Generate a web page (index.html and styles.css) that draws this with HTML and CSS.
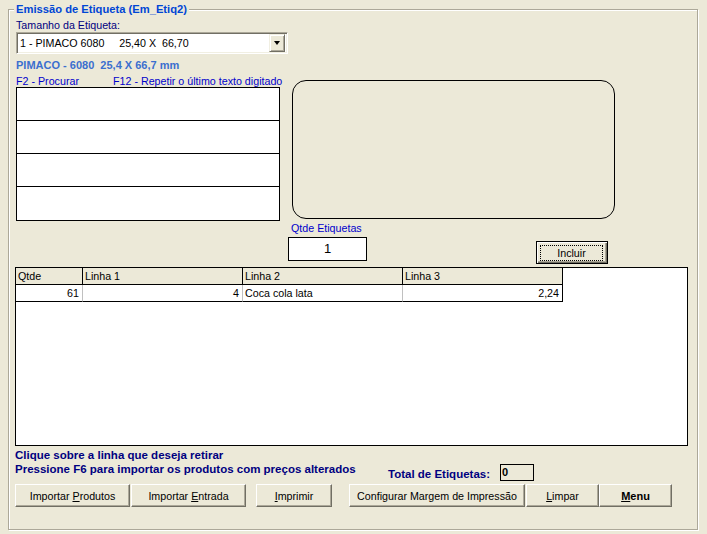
FILE: index.html
```html
<!DOCTYPE html>
<html lang="pt-BR">
<head>
<meta charset="utf-8">
<title>Emissão de Etiqueta</title>
<link rel="stylesheet" href="styles.css">
</head>
<body>
<div class="frame">
  <div class="frame-title">Emissão de Etiqueta (Em_Etiq2)</div>
  <div class="label-navy">Tamanho da Etiqueta:</div>
  <div class="combo">
    <span class="combo-text">1 - PIMACO 6080     25,40 X  66,70</span>
    <span class="combo-btn"><span class="tri"></span></span>
  </div>
  <div class="pimaco">PIMACO - 6080&nbsp; 25,4 X 66,7 mm</div>
  <div class="editor">
    <div class="left-col">
      <div class="hints"><span class="hint-f2">F2 - Procurar</span><span>F12 - Repetir o último texto digitado</span></div>
      <div class="lines">
        <div class="line"></div>
        <div class="line"></div>
        <div class="line"></div>
        <div class="line"></div>
      </div>
    </div>
    <div class="right-col">
      <div class="preview"></div>
      <div class="qty-row">
        <div class="qty">
          <div class="qty-label">Qtde Etiquetas</div>
          <div class="qty-box">1</div>
        </div>
        <button class="btn btn-default"><span class="focus">Incluir</span></button>
      </div>
    </div>
  </div>
  <div class="list">
    <div class="list-grid">
      <div class="th">Qtde</div>
      <div class="th">Linha 1</div>
      <div class="th">Linha 2</div>
      <div class="th">Linha 3</div>
      <div class="td num">61</div>
      <div class="td num">4</div>
      <div class="td">Coca cola lata</div>
      <div class="td num last">2,24</div>
    </div>
  </div>
  <div class="status">
    <div class="msgs">
      <div>Clique sobre a linha que deseja retirar</div>
      <div>Pressione F6 para importar os produtos com preços alterados</div>
    </div>
    <div class="total">
      <span class="total-label">Total de Etiquetas:</span>
      <span class="total-box">0</span>
    </div>
  </div>
  <div class="actions">
    <button class="btn b-prod">Importar <u>P</u>rodutos</button>
    <button class="btn b-entr">Importar <u>E</u>ntrada</button>
    <button class="btn b-impr"><u>I</u>mprimir</button>
    <button class="btn b-conf">Configurar Margem de Impressão</button>
    <button class="btn b-limp"><u>L</u>impar</button>
    <button class="btn b-menu"><u>M</u>enu</button>
  </div>
</div>
</body>
</html>
```

FILE: styles.css
```css
html, body {
  margin: 0;
  padding: 0;
}
body {
  width: 707px;
  height: 534px;
  overflow: hidden;
  background: #ece9d8;
  font-family: "Liberation Sans", Arial, sans-serif;
  font-size: 10.7px;
  color: #000;
}
.frame {
  position: relative;
  box-sizing: border-box;
  width: 690px;
  height: 521px;
  margin: 9px 0 0 8px;
  border: 1px solid #aca899;
  box-shadow: inset 1px 1px 0 #fff, 1px 1px 0 #fff;
  padding: 9px 9px 0 6px;
}
.frame-title {
  position: absolute;
  top: -8px;
  left: 5px;
  padding: 0 2px;
  background: #ece9d8;
  color: #0046d5;
  font-weight: bold;
  font-size: 11.2px;
  line-height: 14px;
  white-space: nowrap;
}
.label-navy {
  padding-left: 1px;
  line-height: 13px;
  color: #000080;
}
.combo {
  box-sizing: border-box;
  display: flex;
  align-items: center;
  justify-content: space-between;
  width: 272px;
  height: 22px;
  margin-left: 1px;
  background: #fff;
  border: 1px solid;
  border-color: #aca899 #fff #fff #aca899;
  box-shadow: inset 1px 1px 0 #716f64, inset -1px -1px 0 #f1efe2;
  padding: 0 2px 0 2px;
}
.combo-text {
  white-space: pre;
  padding-left: 1px;
  line-height: 14px;
}
.combo-btn {
  box-sizing: border-box;
  display: flex;
  align-items: center;
  justify-content: center;
  width: 16px;
  height: 18px;
  background: #ece9d8;
  border: 1px solid;
  border-color: #f1efe2 #716f64 #716f64 #f1efe2;
  box-shadow: inset 1px 1px 0 #fff, inset -1px -1px 0 #aca899;
}
.tri {
  width: 0;
  height: 0;
  border-left: 3.5px solid transparent;
  border-right: 3.5px solid transparent;
  border-top: 4px solid #000;
}
.pimaco {
  margin-top: 5px;
  padding-left: 1px;
  font-size: 11px;
  font-weight: bold;
  line-height: 13px;
  color: #3b6fcf;
  white-space: nowrap;
}
.editor {
  display: flex;
  margin-top: 3px;
}
.left-col {
  width: 264px;
  margin-left: 1px;
}
.hints {
  display: flex;
  height: 12px;
  line-height: 12px;
  color: #0000cc;
  white-space: nowrap;
}
.hint-f2 {
  width: 97px;
  flex: none;
}
.lines {
  box-sizing: border-box;
  width: 264px;
  height: 134px;
  border: 1px solid #000;
  background: #fff;
}
.line {
  height: 32px;
  border-bottom: 1px solid #000;
}
.line:last-child {
  height: 33px;
  border-bottom: 0;
}
.right-col {
  margin-left: 8px;
}
.preview {
  box-sizing: border-box;
  width: 323px;
  height: 139px;
  margin: 5px 0 0 4px;
  border: 1px solid #000;
  border-radius: 14px;
}
.qty-row {
  display: flex;
  align-items: flex-start;
  margin-top: 3px;
}
.qty {
  width: 79px;
}
.qty-label {
  padding-left: 3px;
  line-height: 13px;
  color: #0000cc;
  white-space: nowrap;
}
.qty-box {
  box-sizing: border-box;
  width: 79px;
  height: 24px;
  margin-top: 2px;
  border: 1px solid #000;
  background: #fff;
  text-align: center;
  font-size: 13px;
  line-height: 21px;
}
.btn {
  box-sizing: border-box;
  height: 23px;
  padding: 0;
  margin: 0;
  font-family: "Liberation Sans", Arial, sans-serif;
  font-size: 10.7px;
  color: #000;
  background: #ece9d8;
  border: 1px solid;
  border-color: #fff #716f64 #716f64 #fff;
  box-shadow: inset -1px -1px 0 #aca899;
  white-space: nowrap;
  cursor: default;
}
.btn-default {
  width: 72px;
  margin: 19px 0 0 169px;
  padding: 3px 4px 2px 3px;
  border: 1px solid #000;
  box-shadow: inset 1px 1px 0 #fff, inset -1px -1px 0 #716f64, inset -2px -2px 0 #aca899;
}
.focus {
  box-sizing: border-box;
  display: flex;
  align-items: center;
  justify-content: center;
  width: 100%;
  height: 100%;
  border: 1px dotted #000;
}
.list {
  box-sizing: border-box;
  width: 673px;
  height: 179px;
  margin-top: 3px;
  border: 1px solid #000;
  background: #fff;
}
.list-grid {
  display: grid;
  grid-template-columns: 67px 160px 160px 160px;
  width: 547px;
}
.th, .td {
  box-sizing: border-box;
  height: 17px;
  line-height: 16px;
  border-bottom: 1px solid #000;
  white-space: nowrap;
  overflow: hidden;
}
.th {
  background: #ece9d8;
  border-right: 1px solid #000;
  padding-left: 2px;
}
.td {
  border-right: 1px solid #c0c0c0;
  padding: 0 3px 0 2px;
}
.td.last {
  border-right-color: #000;
}
.num {
  text-align: right;
}
.status {
  display: flex;
  margin-top: 2px;
}
.msgs {
  width: 373px;
  font-size: 11.5px;
  font-weight: bold;
  line-height: 14px;
  color: #000080;
  white-space: nowrap;
}
.total {
  display: flex;
  align-items: center;
  margin-top: 16px;
  color: #000080;
  font-size: 11.5px;
  font-weight: bold;
}
.total-label {
  width: 112px;
  white-space: nowrap;
  padding-top: 2px;
}
.total-box {
  box-sizing: border-box;
  width: 34px;
  height: 17px;
  border: 1px solid #000;
  padding-left: 1px;
  color: #000;
  font-size: 11px;
  line-height: 15px;
}
.actions {
  display: flex;
  margin-top: 3px;
}
.b-prod { width: 115px; }
.b-entr { width: 115px; margin-left: 1px; }
.b-impr { width: 76px; margin-left: 10px; }
.b-conf { width: 176px; margin-left: 17px; }
.b-limp { width: 73px; margin-left: 1px; }
.b-menu { width: 73px; font-weight: bold; font-size: 11px; }
```
